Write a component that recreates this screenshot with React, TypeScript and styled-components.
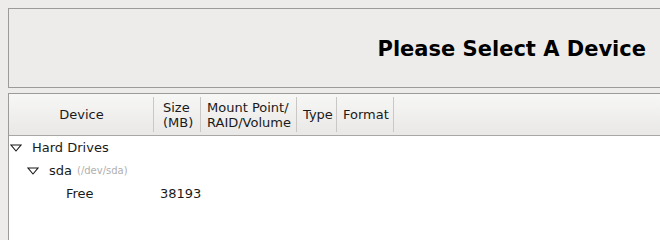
import styled, { createGlobalStyle } from "styled-components";

const GlobalStyle = createGlobalStyle`
  html, body {
    margin: 0;
    padding: 0;
    background: #edeceb;
    font-family: "DejaVu Sans", "Liberation Sans", sans-serif;
    overflow: hidden;
  }
`;

type Column = { label: string[]; width: number; align: "center" | "left"; pad: number };

const columns: Column[] = [
  { label: ["Device"], width: 145, align: "center", pad: 0 },
  { label: ["Size", "(MB)"], width: 47, align: "left", pad: 9 },
  { label: ["Mount Point/", "RAID/Volume"], width: 96, align: "left", pad: 6 },
  { label: ["Type"], width: 40, align: "left", pad: 6 },
  { label: ["Format"], width: 57, align: "left", pad: 6 },
];

type Row = { name: string; hint?: string; depth: number; expander: boolean; size?: string };

const rows: Row[] = [
  { name: "Hard Drives", depth: 0, expander: true },
  { name: "sda", hint: "(/dev/sda)", depth: 1, expander: true },
  { name: "Free", depth: 2, expander: false, size: "38193" },
];

function Expander() {
  return (
    <svg width="12" height="8" viewBox="0 0 12 8">
      <path d="M1 1 L11 1 L6 7 Z" fill="none" stroke="#1a1a1a" strokeWidth="1.1" />
    </svg>
  );
}

export default function App(): JSX.Element {
  return (
    <>
      <GlobalStyle />
      <Page>
        <TitleBar>
          <Title>Please Select A Device</Title>
        </TitleBar>
        <TreeFrame>
          <Header>
            {columns.map((c) => (
              <HeaderCell key={c.label.join()} $width={c.width} $align={c.align} $pad={c.pad}>
                {c.label.map((l) => (
                  <span key={l}>{l}</span>
                ))}
              </HeaderCell>
            ))}
          </Header>
          <Body>
            {rows.map((r) => (
              <TreeRow key={r.name}>
                <NameCell $depth={r.depth}>
                  <ExpanderSlot>{r.expander && <Expander />}</ExpanderSlot>
                  <Name>{r.name}</Name>
                  {r.hint && <Hint>{r.hint}</Hint>}
                </NameCell>
                <SizeCell>{r.size}</SizeCell>
              </TreeRow>
            ))}
          </Body>
        </TreeFrame>
      </Page>
    </>
  );
}

const Page = styled.div`
  padding: 8px 0 0 8px;
  width: 100vw;
  height: 100vh;
  box-sizing: border-box;
  overflow: hidden;
  display: flex;
  flex-direction: column;
  gap: 5px;
`;

const TitleBar = styled.div`
  height: 78px;
  flex-shrink: 0;
  border: 1px solid #9c9b99;
  border-right: none;
  background: #edeceb;
  display: flex;
  align-items: center;
  justify-content: flex-end;
  padding-right: 14px;
`;

const Title = styled.h1`
  margin: 1px 0 0;
  font-size: 21px;
  font-weight: bold;
  color: #000;
  white-space: nowrap;
`;

const TreeFrame = styled.div`
  flex: 1;
  border: 1px solid #9c9b99;
  border-right: none;
  border-bottom: none;
  background: #ffffff;
  display: flex;
  flex-direction: column;
`;

const Header = styled.div`
  height: 41px;
  flex-shrink: 0;
  display: flex;
  border-bottom: 1px solid #a8a7a5;
  background: linear-gradient(#f7f7f6, #e9e8e7);
`;

const HeaderCell = styled.div<{ $width: number; $align: "center" | "left"; $pad: number }>`
  position: relative;
  width: ${(p) => p.$width}px;
  box-sizing: border-box;
  padding-left: ${(p) => p.$pad}px;
  display: flex;
  flex-direction: column;
  justify-content: center;
  align-items: ${(p) => (p.$align === "center" ? "center" : "flex-start")};
  font-size: 13px;
  line-height: 15px;
  color: #1a1a1a;
  white-space: nowrap;

  &::after {
    content: "";
    position: absolute;
    right: 0;
    top: 3px;
    bottom: 3px;
    width: 1px;
    background: #c9c8c6;
  }
`;

const Body = styled.div`
  display: flex;
  flex-direction: column;
`;

const TreeRow = styled.div`
  height: 23px;
  display: flex;
  align-items: center;
  font-size: 13px;
  color: #1a1a1a;
`;

const NameCell = styled.div<{ $depth: number }>`
  width: 145px;
  display: flex;
  align-items: center;
  padding-left: ${(p) => 1 + p.$depth * 17}px;
  box-sizing: border-box;
`;

const ExpanderSlot = styled.span`
  width: 22px;
  display: flex;
  align-items: center;
`;

const Name = styled.span`
  white-space: nowrap;
`;

const Hint = styled.span`
  margin-left: 5px;
  font-size: 10px;
  color: #b0afad;
  white-space: nowrap;
`;

const SizeCell = styled.div`
  padding-left: 6px;
  white-space: nowrap;
`;
